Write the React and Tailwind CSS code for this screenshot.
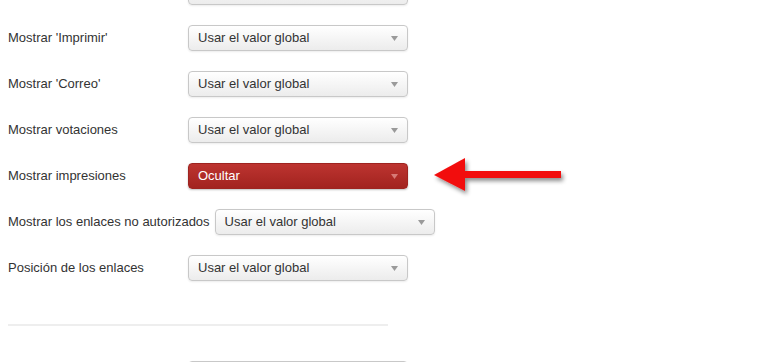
import React from "react";

const filas = [
  { label: "Mostrar 'Imprimir'", value: "Usar el valor global" },
  { label: "Mostrar 'Correo'", value: "Usar el valor global" },
  { label: "Mostrar votaciones", value: "Usar el valor global" },
  { label: "Mostrar impresiones", value: "Ocultar", rojo: true },
  { label: "Mostrar los enlaces no autorizados", value: "Usar el valor global" },
  { label: "Posición de los enlaces", value: "Usar el valor global" },
];

const Caret = ({ rojo }) => (
  <svg width="7" height="5" viewBox="0 0 7 5" className="shrink-0">
    <path d="M0 0h7L3.5 5z" fill={rojo ? "#d77a76" : "#9a9a9a"} />
  </svg>
);

const Selector = ({ value, rojo }) => (
  <div
    className={`flex h-[26px] w-[220px] shrink-0 items-center justify-between rounded-[4px] border pl-[9px] pr-[9px] text-[13px] ${
      rojo
        ? "border-[#9e2420] bg-gradient-to-b from-[#bd3430] to-[#a2231f] text-white shadow-[0_1px_2px_rgba(0,0,0,0.25)]"
        : "border-[#c8c8c8] bg-gradient-to-b from-white to-[#ececec] text-[#333] shadow-[0_1px_2px_rgba(0,0,0,0.08)]"
    }`}>
    <span>{value}</span>
    <Caret rojo={rojo} />
  </div>
);

const Flecha = () => (
  <svg width="140" height="44" viewBox="0 0 140 44" className="ml-[24px] shrink-0">
    <defs>
      <filter id="sombra" x="-10%" y="-30%" width="130%" height="170%">
        <feDropShadow dx="2" dy="3" stdDeviation="2" floodColor="#000" floodOpacity="0.45" />
      </filter>
    </defs>
    <g filter="url(#sombra)" fill="#f20d0d">
      <polygon points="2,21 33,4 33,37" />
      <rect x="30" y="17" width="99" height="7" />
    </g>
  </svg>
);

export default function App() {
  return (
    <div
      className="h-[362px] w-[763px] overflow-hidden bg-white text-[13px] text-[#333]"
      style={{ fontFamily: '"Liberation Sans", Arial, sans-serif' }}>
      <div className="flex flex-col gap-[20px] pl-[8px]">
        <div className="-mt-[21px] flex items-center">
          <div className="w-[180px]" />
          <Selector value="" />
        </div>
        {filas.map((f) => (
          <div key={f.label} className="flex h-[26px] items-center">
            <label className="min-w-[180px] whitespace-nowrap pr-[5px]">{f.label}</label>
            <Selector value={f.value} rojo={f.rojo} />
            {f.rojo && <Flecha />}
          </div>
        ))}
      </div>
      <div className="ml-[8px] mt-[43px] h-[2px] w-[380px] bg-[#eeeeee]" />
      <div className="mt-[35px] flex pl-[188px]">
        <Selector value="" />
      </div>
    </div>
  );
}
